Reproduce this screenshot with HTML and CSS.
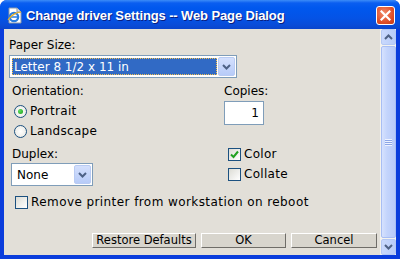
FILE: index.html
```html
<!DOCTYPE html>
<html>
<head>
<meta charset="utf-8">
<link rel="stylesheet" href="styles.css">
</head>
<body>
<div class="window">
  <div class="titlebar">
    <svg class="appicon" width="17" height="17" viewBox="0 0 17 17">
      <path d="M3 1h8l4 4v11H3z" fill="#fff" stroke="#8a97a8"/>
      <path d="M11 1v4h4" fill="#dde3ea" stroke="#8a97a8"/>
      <circle cx="8" cy="10" r="4.2" fill="none" stroke="#2a7de0" stroke-width="2.2"/>
      <path d="M4.5 10h7" stroke="#2a7de0" stroke-width="1.6"/>
      <path d="M2 13c3-5 9-8 13-8" fill="none" stroke="#e8b020" stroke-width="1.2"/>
    </svg>
    <span class="title">Change driver Settings -- Web Page Dialog</span>
    <div class="close">
      <svg width="11" height="11" viewBox="0 0 11 11"><path d="M1.5 1.5l8 8M9.5 1.5l-8 8" stroke="#fff" stroke-width="2.2" stroke-linecap="square"/></svg>
    </div>
  </div>
  <div class="body">
    <div class="content">
      <div class="label">Paper Size:</div>
      <div class="select wide">
        <div class="value selected"><span class="focus">Letter 8 1/2 x 11 in</span></div>
        <div class="dd"><svg width="9" height="6" viewBox="0 0 9 6"><path d="M1 1l3.5 3.5L8 1" fill="none" stroke="#4d6185" stroke-width="2"/></svg></div>
      </div>
      <div class="row two">
        <div class="col left">
          <div class="label">Orientation:</div>
          <div class="opt first"><span class="radio on"></span>Portrait</div>
          <div class="opt"><span class="radio"></span>Landscape</div>
        </div>
        <div class="col right">
          <div class="label">Copies:</div>
          <div class="input">1</div>
        </div>
      </div>
      <div class="row three">
        <div class="col left">
          <div class="label">Duplex:</div>
          <div class="select small">
            <div class="value">None</div>
            <div class="dd"><svg width="9" height="6" viewBox="0 0 9 6"><path d="M1 1l3.5 3.5L8 1" fill="none" stroke="#4d6185" stroke-width="2"/></svg></div>
          </div>
        </div>
        <div class="col checks">
          <div class="opt"><span class="check on"><svg width="9" height="9" viewBox="0 0 9 9"><path d="M1 4.5l2.5 2.5L8 1.5" fill="none" stroke="#21a121" stroke-width="2"/></svg></span>Color</div>
          <div class="opt"><span class="check"></span>Collate</div>
        </div>
      </div>
      <div class="opt remove"><span class="check"></span>Remove printer from workstation on reboot</div>
      <div class="buttons">
        <div class="btn restore">Restore Defaults</div>
        <div class="btn ok">OK</div>
        <div class="btn cancel">Cancel</div>
      </div>
    </div>
    <div class="scrollbar">
      <div class="sbtn"><svg width="9" height="6" viewBox="0 0 9 6"><path d="M1 5l3.5-3.5L8 5" fill="none" stroke="#4d6185" stroke-width="2"/></svg></div>
      <div class="thumb"><span class="grip"></span></div>
      <div class="sbtn"><svg width="9" height="6" viewBox="0 0 9 6"><path d="M1 1l3.5 3.5L8 1" fill="none" stroke="#4d6185" stroke-width="2"/></svg></div>
    </div>
  </div>
</div>
</body>
</html>
```
FILE: styles.css
```css
html, body { margin: 0; padding: 0; }
body { width: 400px; height: 259px; overflow: hidden; background: #fff; font-family: "DejaVu Sans", Verdana, sans-serif; font-size: 12px; color: #000; }
.window { width: 400px; height: 259px; display: flex; flex-direction: column; box-sizing: border-box; background: #0a3ddc; border-radius: 7px 7px 0 0; overflow: hidden; }
.titlebar { height: 29px; flex: none; display: flex; align-items: center; padding: 0 5px 0 6px; background: linear-gradient(#3c8cf8 0px, #0a5ef0 3px, #0058ee 8px, #0453e6 18px, #0a4cd8 25px, #0a45cc 29px); }
.appicon { flex: none; margin-right: 3px; margin-top: 2px; }
.title { font-family: "Liberation Sans", Arial, sans-serif; font-weight: bold; font-size: 13px; letter-spacing: -0.12px; color: #fff; text-shadow: 1px 1px 0 #0a1e80; flex: 1; margin-top: 1px; }
.close { width: 19px; height: 19px; box-sizing: border-box; border: 1px solid #fff; border-radius: 3px; background: radial-gradient(circle at 40% 35%, #f08a6a, #e0502a 60%, #c83810); display: flex; align-items: center; justify-content: center; margin-top: 1px; }
.body { flex: 1; display: flex; margin: 0 4px 4px 4px; background: #e2dfd8; }
.content { flex: 1; padding: 9px 0 0 5px; display: flex; flex-direction: column; }
.label { height: 14px; line-height: 14px; }
.select { display: flex; border: 1px solid #7f9db9; background: #fff; box-sizing: border-box; height: 23px; }
.select.wide { width: 228px; margin-top: 3px; }
.select.small { width: 82px; margin-top: 2px; margin-left: -1px; }
.select .value { flex: 1; display: flex; align-items: center; padding-left: 2px; }
.select .value.selected { margin: 2px 0 2px 2px; padding: 0; background: #316ac5; color: #fff; }
.focus { flex: 1; height: 100%; box-sizing: border-box; border: 1px dotted #f3c050; display: flex; align-items: center; padding-left: 1px; }
.small .value { padding-left: 5px; }
.dd { width: 15px; margin: 1px; border: 1px solid #b9cbf3; border-radius: 2px; background: linear-gradient(#d4e0fd, #b7cbf8); display: flex; align-items: center; justify-content: center; }
.row { display: flex; }
.row.two { margin-top: 6px; }
.col.left { width: 212px; padding-left: 3px; }
.opt { display: flex; align-items: center; height: 20px; letter-spacing: 0.3px; }
.opt.first { margin-top: 3px; }
.radio { width: 11px; height: 11px; border: 1px solid #1c5180; border-radius: 50%; background: radial-gradient(#fff, #e6e6e0); margin: 0 3px 0 2px; display: flex; align-items: center; justify-content: center; }
.radio.on::after { content: ""; width: 5px; height: 5px; border-radius: 50%; background: radial-gradient(circle at 35% 35%, #5ee05e, #1a9a1a); }
.input { width: 40px; height: 24px; box-sizing: border-box; border: 1px solid #7f9db9; background: #fff; margin-top: 3px; text-align: right; line-height: 22px; padding-right: 4px; }
.row.three { margin-top: 6px; }
.col.checks { padding-left: 4px; margin-top: -3px; }
.check { width: 11px; height: 11px; border: 1px solid #1c5180; background: linear-gradient(135deg, #dcdcd5, #fff); margin-right: 3px; display: flex; align-items: center; justify-content: center; }
.remove { margin-top: 6px; padding-left: 6px; letter-spacing: 0.42px; }
.buttons { display: flex; justify-content: flex-end; margin-top: auto; margin-bottom: 7px; margin-right: 3px; gap: 5px; }
.btn { height: 15px; box-sizing: border-box; border: 1px solid; border-color: #fff #6f6d68 #6f6d68 #fff; background: #d8d5cd; text-align: center; line-height: 13px; font-size: 11.5px; }
.restore { width: 104px; }
.ok { width: 85px; }
.cancel { width: 86px; }
.scrollbar { width: 16px; flex: none; display: flex; flex-direction: column; background: #f4f3ee; border-left: 1px solid #f4f3ee; box-sizing: border-box; }
.sbtn { height: 16px; flex: none; box-sizing: border-box; border: 1px solid #b4c8f4; border-radius: 2px; background: linear-gradient(90deg, #c9d9fd, #b8ccf8); display: flex; align-items: center; justify-content: center; }
.thumb { flex: 1; margin: 1px 0; box-sizing: border-box; border: 1px solid #a8bef4; border-radius: 2px; background: linear-gradient(90deg, #d6e2fe, #c3d4fc 40%, #b8cbf9); display: flex; align-items: center; justify-content: center; }
.grip { width: 7px; height: 7px; background: repeating-linear-gradient(#eef3ff 0 1px, #8ca6e6 1px 2px); }
```
